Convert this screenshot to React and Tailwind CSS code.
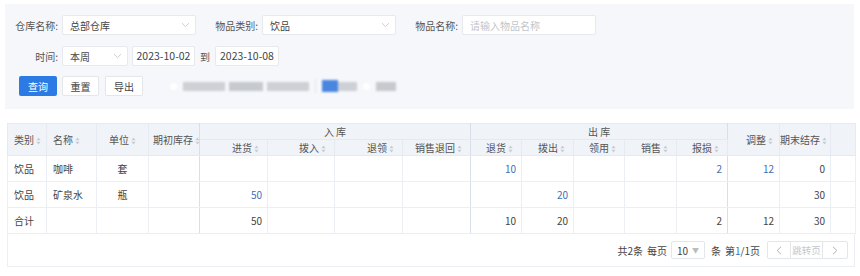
import React from 'react';

const Chevron = () => (
    <svg width="9" height="6" viewBox="0 0 9 6" className="shrink-0">
        <path d="M1 1.2 L4.5 4.6 L8 1.2" fill="none" stroke="#c4c8cf" strokeWidth="0.9" />
    </svg>
);

const SortIcon = () => (
    <svg width="5" height="8" viewBox="0 0 5 8" className="inline-block ml-[2px] align-[-1px]">
        <path d="M2.5 0.5 L4.6 3.2 L0.4 3.2 Z" fill="#c8ccd3" />
        <path d="M2.5 7.5 L4.6 4.8 L0.4 4.8 Z" fill="#c8ccd3" />
    </svg>
);

const Label = ({ children }) => (
    <div className="w-[46px] text-right text-[10px] text-[#555] mr-[4px] whitespace-nowrap">{children}</div>
);

const SelectBox = ({ value, width }) => (
    <div className={`${width} h-[20px] bg-white border border-[#e6e9ee] rounded-[2px] flex items-center justify-between pl-[7px] pr-[5px] text-[10px] text-[#444]`}>
        <span>{value}</span>
        <Chevron />
    </div>
);

const cols = [39, 50, 52, 51, 68, 67, 68, 68, 51, 52, 51, 52, 51, 52, 51, 25];

const rows = [
    { cat: '饮品', name: '咖啡', unit: '套', v: ['', '', '', '', '10', '', '', '', '2', '12', '0'], blue: [4, 8, 9] },
    { cat: '饮品', name: '矿泉水', unit: '瓶', v: ['50', '', '', '', '', '20', '', '', '', '', '30'], blue: [0, 5] },
    { cat: '合计', name: '', unit: '', v: ['50', '', '', '', '10', '20', '', '', '2', '12', '30'], blue: [] },
];

// columns that close a group get a slightly darker line
const groupEdge = [3, 7, 12];

export default function App() {
    const th = 'border border-[#e6e9ef] bg-[#f0f3f7] text-[10px] font-normal text-[#555] whitespace-nowrap p-0';
    const td = 'border border-[#ebeef3] text-[10px] whitespace-nowrap p-0';
    const edge = (i) => (groupEdge.includes(i) ? 'border-r-[#d9dfe8]' : '');

    return (
        <div className="w-[860px] h-[276px] bg-white font-['Noto_Sans_CJK_SC','Noto_Sans',sans-serif] overflow-hidden">
            <div className="mt-[4px] ml-[5px] w-[849px] h-[105px] bg-[#f5f7fa] pt-[11px] pl-[7px]">
                <div className="flex items-center">
                    <Label>仓库名称:</Label>
                    <SelectBox value="总部仓库" width="w-[134px]" />
                    <div className="ml-[16px] flex items-center">
                        <Label>物品类别:</Label>
                        <SelectBox value="饮品" width="w-[134px]" />
                    </div>
                    <div className="ml-[16px] flex items-center">
                        <Label>物品名称:</Label>
                        <div className="w-[134px] h-[20px] bg-white border border-[#e6e9ee] rounded-[2px] flex items-center pl-[7px] text-[10px] text-[#c2c5cb]">
                            请输入物品名称
                        </div>
                    </div>
                </div>

                <div className="flex items-center mt-[11px]">
                    <Label>时间:</Label>
                    <SelectBox value="本周" width="w-[66px]" />
                    <div className="ml-[4px] w-[63px] h-[20px] bg-white border border-[#e6e9ee] rounded-[2px] flex items-center justify-center text-[10.5px] text-[#444]">
                        2023-10-02
                    </div>
                    <span className="mx-[5px] text-[10px] text-[#555]">到</span>
                    <div className="w-[64px] h-[20px] bg-white border border-[#e6e9ee] rounded-[2px] flex items-center justify-center text-[10.5px] text-[#444]">
                        2023-10-08
                    </div>
                </div>

                <div className="flex items-center mt-[10px] ml-[7px]">
                    <button className="w-[38px] h-[20px] rounded-[2px] bg-[#2c7be5] text-white text-[10px]">查询</button>
                    <button className="ml-[5px] w-[37px] h-[20px] rounded-[2px] bg-white border border-[#e3e6eb] text-[#444] text-[10px]">重置</button>
                    <button className="ml-[6px] w-[38px] h-[20px] rounded-[2px] bg-white border border-[#e3e6eb] text-[#444] text-[10px]">导出</button>

                    {/* blurred region in the source */}
                    <div className="ml-[27px] flex items-center blur-[1px]">
                        <div className="w-[7px] h-[7px] rounded-full bg-white" />
                        <div className="ml-[6px] w-[42px] h-[9px] bg-[#cdd0d4]" />
                        <div className="ml-[4px] w-[34px] h-[9px] bg-[#c6c9ce]" />
                        <div className="ml-[4px] w-[42px] h-[9px] bg-[#cdd0d4]" />
                        <div className="ml-[6px] w-px h-[14px] bg-[#e3e6ea]" />
                        <div className="ml-[6px] w-[16px] h-[12px] bg-[#4a86e0]" />
                        <div className="w-[19px] h-[9px] bg-[#cdd0d4]" />
                        <div className="ml-[6px] w-[7px] h-[7px] rounded-full bg-white" />
                        <div className="ml-[6px] w-[20px] h-[9px] bg-[#c6c9ce]" />
                    </div>
                </div>
            </div>

            <div className="mt-[14px] ml-[7px] w-[848px]">
                <table className="w-[848px] table-fixed border-collapse">
                    <colgroup>
                        {cols.map((w, i) => (
                            <col key={i} style={{ width: w }} />
                        ))}
                    </colgroup>
                    <thead>
                        <tr className="h-[16px]">
                            <th rowSpan={2} className={`${th} text-left pl-[6px]`}>类别<SortIcon /></th>
                            <th rowSpan={2} className={`${th} text-left pl-[6px]`}>名称<SortIcon /></th>
                            <th rowSpan={2} className={`${th} text-center`}>单位<SortIcon /></th>
                            <th rowSpan={2} className={`${th} text-left pl-[4px] border-r-[#d9dfe8]`}>期初库存<SortIcon /></th>
                            <th colSpan={4} className={`${th} text-center border-r-[#d9dfe8]`}>入 库</th>
                            <th colSpan={5} className={`${th} text-center border-r-[#d9dfe8]`}>出 库</th>
                            <th rowSpan={2} className={`${th} text-right pr-[6px]`}>调整<SortIcon /></th>
                            <th rowSpan={2} className={`${th} text-right pr-[4px]`}>期末结存<SortIcon /></th>
                            <th rowSpan={2} className={th}></th>
                        </tr>
                        <tr className="h-[16px]">
                            {['进货', '拨入', '退领', '销售退回', '退货', '拨出', '领用', '销售', '报损'].map((t, i) => (
                                <th key={t} className={`${th} text-right pr-[8px] ${edge(i + 4)}`}>
                                    {t}<SortIcon />
                                </th>
                            ))}
                        </tr>
                    </thead>
                    <tbody>
                        {rows.map((r, ri) => (
                            <tr key={ri} className="h-[26px]">
                                <td className={`${td} text-[#444] pl-[6px]`}>{r.cat}</td>
                                <td className={`${td} text-[#444] pl-[6px]`}>{r.name}</td>
                                <td className={`${td} text-[#444] text-center`}>{r.unit}</td>
                                <td className={`${td} ${edge(3)}`}></td>
                                {r.v.map((v, i) => (
                                    <td
                                        key={i}
                                        className={`${td} text-right pr-[5px] ${edge(i + 4)} ${r.blue.includes(i) ? 'text-[#3d6fb8]' : 'text-[#444]'}`}
                                    >
                                        {v}
                                    </td>
                                ))}
                                <td className={td}></td>
                            </tr>
                        ))}
                    </tbody>
                </table>
                <div className="w-[848px] h-[33px] border-x border-b border-[#ebeef3] flex items-center justify-end pr-[6px] text-[10px] text-[#444]">
                    <span>共2条</span>
                    <span className="ml-[4px]">每页</span>
                    <div className="ml-[4px] w-[34px] h-[18px] border border-[#e3e6eb] rounded-[2px] flex items-center pl-[5px] gap-[4px]">
                        <span>10</span>
                        <span className="text-[7px] text-[#b8bcc3]">▼</span>
                    </div>
                    <span className="ml-[6px]">条</span>
                    <span className="ml-[4px]">第<span className="text-[#3d6fb8]">1</span>/1页</span>
                    <div className="ml-[7px] h-[18px] flex items-center border border-[#e3e6eb] rounded-[2px]">
                        <div className="w-[22px] h-full flex items-center justify-center">
                            <svg width="6" height="9" viewBox="0 0 6 9"><path d="M5 0.8 L1.2 4.5 L5 8.2" fill="none" stroke="#a4a9b0" strokeWidth="0.9" /></svg>
                        </div>
                        <div className="w-[33px] h-full border-x border-[#e3e6eb] flex items-center justify-center text-[9.5px] text-[#c4c7cd]">跳转页</div>
                        <div className="w-[24px] h-full flex items-center justify-center">
                            <svg width="6" height="9" viewBox="0 0 6 9"><path d="M1 0.8 L4.8 4.5 L1 8.2" fill="none" stroke="#a4a9b0" strokeWidth="0.9" /></svg>
                        </div>
                    </div>
                </div>
            </div>
        </div>
    );
}
